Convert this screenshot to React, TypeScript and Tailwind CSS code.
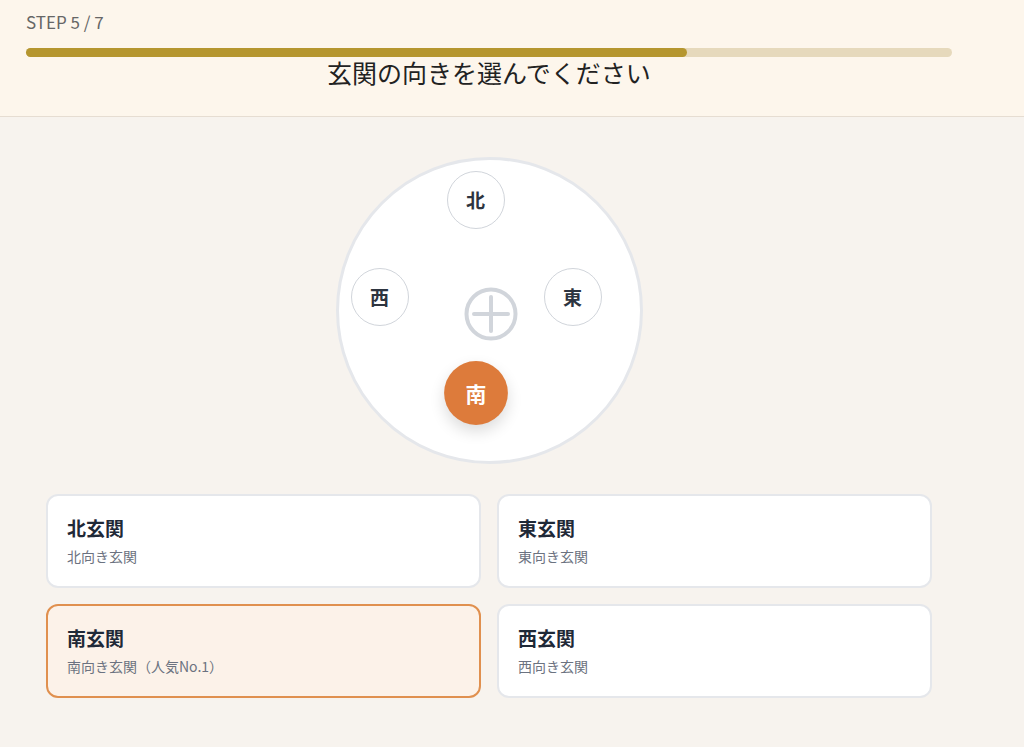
import React, { useState } from "react";

type Dir = "north" | "east" | "south" | "west";

const options: { id: Dir; label: string; title: string; desc: string }[] = [
  { id: "north", label: "北", title: "北玄関", desc: "北向き玄関" },
  { id: "east", label: "東", title: "東玄関", desc: "東向き玄関" },
  { id: "south", label: "南", title: "南玄関", desc: "南向き玄関（人気No.1）" },
  { id: "west", label: "西", title: "西玄関", desc: "西向き玄関" },
];

// node positions on the compass dial (left/top inside the 307px circle)
const nodePos: Record<Dir, string> = {
  north: "left-[108px] top-[11px]",
  west: "left-[12px] top-[108px]",
  east: "left-[205px] top-[108px]",
  south: "left-[108px] top-[204px]",
};

const App: React.FC = () => {
  const [selected, setSelected] = useState<Dir>("south");

  return (
    <div
      className="min-h-[747px] bg-[#f7f3ee] text-[#1f2937]"
      style={{ fontFamily: '"Noto Sans CJK JP", "Noto Sans", sans-serif' }}
    >
      <header className="h-[117px] border-b border-[#e6ddd2] bg-[#fdf6ec] pl-[26px] pr-[72px] pt-[10px]">
        <div className="text-[17px] leading-6 text-[#666]">STEP 5 / 7</div>
        <div className="mt-[14px] h-[9px] w-full rounded-full bg-[#e6d9bc]">
          <div className="h-full rounded-full bg-[#b5962f]" style={{ width: `${(5 / 7) * 100}%` }} />
        </div>
        <h1 className="-mt-[1px] text-center text-[25px] font-normal leading-8 text-[#222]">
          玄関の向きを選んでください
        </h1>
      </header>

      <main className="flex flex-col items-center pl-[46px] pr-[92px] pt-[40px]">
        <div className="relative h-[307px] w-[307px] rounded-full border-[3px] border-[#e5e7eb] bg-white">
          <div className="absolute left-[125px] top-[127px] flex h-[54px] w-[54px] items-center justify-center">
            <svg width="54" height="54" viewBox="0 0 54 54" fill="none" stroke="#d1d5db" strokeWidth="4" strokeLinecap="round">
              <circle cx="27" cy="27" r="24.5" />
              <line x1="27" y1="10" x2="27" y2="44" />
              <line x1="10" y1="27" x2="44" y2="27" />
            </svg>
          </div>
          {options.map((o) => {
            const active = selected === o.id;
            return (
              <button
                key={o.id}
                onClick={() => setSelected(o.id)}
                className={`absolute flex h-[58px] w-[58px] items-center justify-center rounded-full text-[19px] font-bold ${nodePos[o.id]} ${
                  active
                    ? "scale-110 bg-[#dd7b3b] text-white shadow-[0_6px_14px_rgba(0,0,0,0.14)]"
                    : "border-[1.5px] border-[#d1d5db] bg-white text-[#2d3440]"
                }`}
              >
                {o.label}
              </button>
            );
          })}
        </div>

        <div className="mt-[30px] grid w-full grid-cols-2 gap-4">
          {options.map((o) => {
            const active = selected === o.id;
            return (
              <button
                key={o.id}
                onClick={() => setSelected(o.id)}
                className={`flex h-[94px] flex-col items-start justify-start rounded-[12px] border-2 px-[19px] pt-[18px] text-left ${
                  active ? "border-[#e0904f] bg-[#fcf2e9]" : "border-[#e5e7eb] bg-white"
                }`}
              >
                <div className="text-[19px] font-bold leading-7 text-[#1f2937]">{o.title}</div>
                <div className="mt-[4px] text-[14px] leading-5 text-[#6b7280]">{o.desc}</div>
              </button>
            );
          })}
        </div>
      </main>
    </div>
  );
};

export default App;
